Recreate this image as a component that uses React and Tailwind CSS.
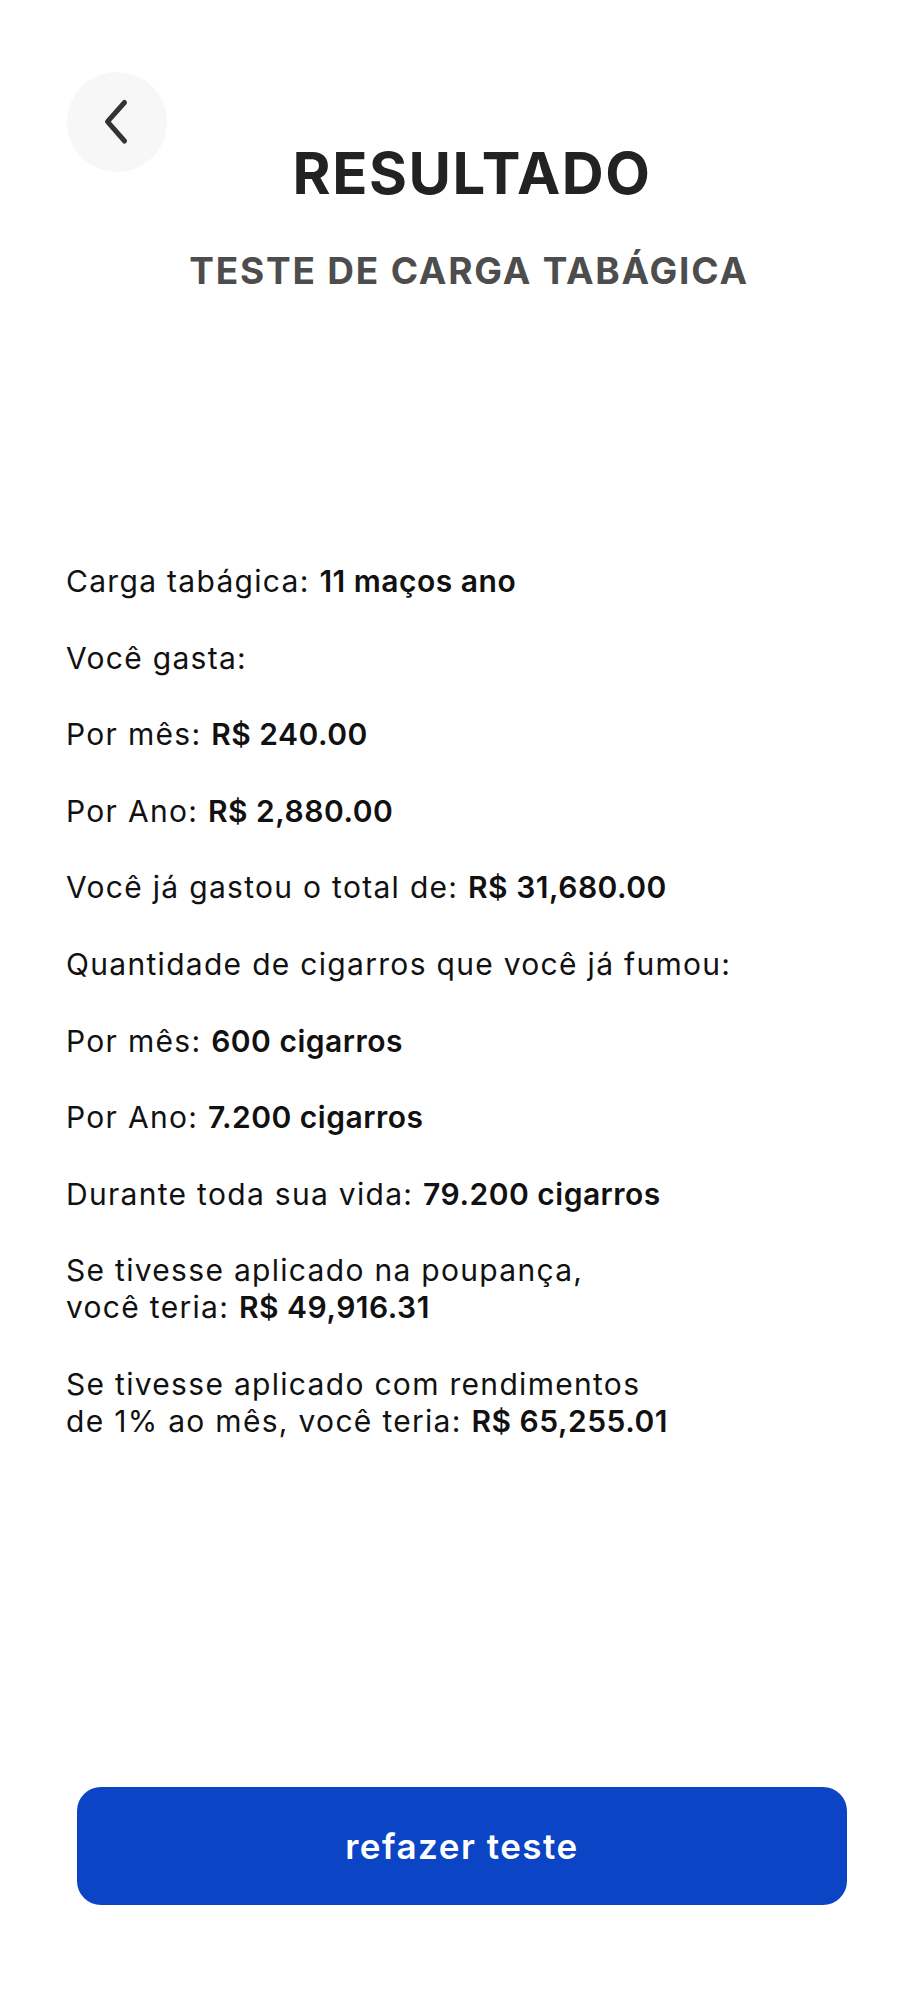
import { useState } from 'react';

const rows = [
  { label: 'Carga tabágica:', value: '11 maços ano' },
  { label: 'Você gasta:' },
  { label: 'Por mês:', value: 'R$ 240.00' },
  { label: 'Por Ano:', value: 'R$ 2,880.00' },
  { label: 'Você já gastou o total de:', value: 'R$ 31,680.00' },
  { label: 'Quantidade de cigarros que você já fumou:' },
  { label: 'Por mês:', value: '600 cigarros' },
  { label: 'Por Ano:', value: '7.200 cigarros' },
  { label: 'Durante toda sua vida:', value: '79.200 cigarros' },
];

function BackButton({ onClick }) {
  return (
    <button
      onClick={onClick}
      aria-label="Voltar"
      className="absolute left-[67px] top-[72px] w-[100px] h-[100px] rounded-full bg-[#f7f7f7] flex items-center justify-center"
    >
      <svg width="100" height="100" viewBox="0 0 100 100" fill="none">
        <path
          d="M57.5 30.5 L40.5 49.7 L57.5 69"
          stroke="#333333"
          strokeWidth="5"
          strokeLinecap="round"
          strokeLinejoin="round"
        />
      </svg>
    </button>
  );
}

function Value({ children }) {
  return <span className="font-semibold tracking-[0.5px] proportional-nums">{children}</span>;
}

export default function App() {
  const [restarted, setRestarted] = useState(0);

  return (
    <div className="relative min-h-screen bg-white flex flex-col font-['Inter','Noto_Sans',sans-serif]">
      <BackButton onClick={() => window.history.back()} />

      {/* Header */}
      <header className="pt-[144px] text-center">
        <h1 className="pl-[20px] text-[58px] leading-[58px] font-bold tracking-[1.6px] text-[#222222]">
          RESULTADO
        </h1>
        <h2 className="mt-[51px] pl-[14px] text-[37px] leading-[36px] font-bold tracking-[1.8px] text-[#4d4d4d]">
          TESTE DE CARGA TABÁGICA
        </h2>
      </header>

      {/* Results */}
      <main className="mt-[274px] pl-[66px] pr-[40px] flex flex-col gap-[39.6px] text-[30px] leading-[37px] tracking-[1.3px] text-[#111111]">
        {rows.map((row, i) => (
          <p key={i}>
            {row.label}
            {row.value && <> <Value>{row.value}</Value></>}
          </p>
        ))}
        <p>
          Se tivesse aplicado na poupança,
          <br />
          você teria: <Value>R$ 49,916.31</Value>
        </p>
        <p>
          Se tivesse aplicado com rendimentos
          <br />
          de 1% ao mês, você teria: <Value>R$ 65,255.01</Value>
        </p>
      </main>

      <div className="mt-auto mb-[95px] px-[77px]">
        <button
          onClick={() => setRestarted(restarted + 1)}
          className="w-full h-[118px] rounded-[24px] bg-[#0b44c5] text-white text-[35px] font-semibold tracking-[1.5px]"
        >
          refazer teste
        </button>
      </div>
    </div>
  );
}
